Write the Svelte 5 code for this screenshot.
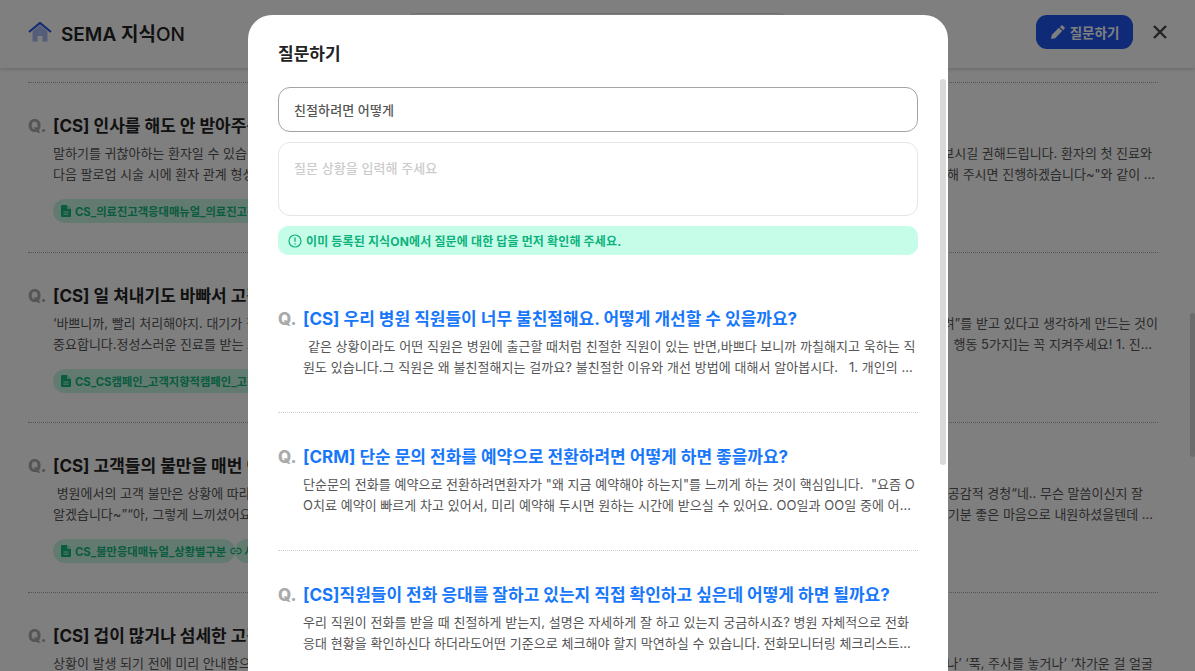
<script lang="ts">
  const items = [
    {
      title: '[CS] 인사를 해도 안 받아주는 환자는 어떻게 응대할까요?',
      lines: [
        { head: '말하기를 귀찮아하는 환자일 수 있습니다. 이런 경우', tail: '보시길 권해드립니다. 환자의 첫 진료와', inset: 6 },
        { head: '다음 팔로업 시술 시에 환자 관계 형성을 위해 먼저', tail: '해 주시면 진행하겠습니다~"와 같이 ...', inset: 3 }
      ],
      tags: [{ icon: 'file', label: 'CS_의료진고객응대매뉴얼_의료진고객응대' }]
    },
    {
      title: '[CS] 일 쳐내기도 바빠서 고객 응대가 어려워요',
      lines: [
        { head: '‘바쁘니까, 빨리 처리해야지. 대기가 길어지면 안 돼', tail: '려”를 받고 있다고 생각하게 만드는 것이', inset: 0 },
        { head: '중요합니다.정성스러운 진료를 받는 느낌을 주려면', tail: '행동 5가지]는 꼭 지켜주세요! 1. 진...', inset: 6 }
      ],
      tags: [{ icon: 'file', label: 'CS_CS캠페인_고객지향적캠페인_고객지향' }]
    },
    {
      title: '[CS] 고객들의 불만을 매번 어떻게 처리하나요?',
      lines: [
        { head: '\u00a0병원에서의 고객 불만은 상황에 따라 다릅니다. 먼저', tail: '공감적 경청“네.. 무슨 말씀이신지 잘', inset: 15 },
        { head: '알겠습니다~”“아, 그렇게 느끼셨어요? 많이 불편하', tail: '기분 좋은 마음으로 내원하셨을텐데 ...', inset: 5 }
      ],
      tags: [
        { icon: 'file', label: 'CS_불만응대매뉴얼_상황별구분' },
        { icon: 'link', label: '사례' }
      ]
    },
    {
      title: '[CS] 겁이 많거나 섬세한 고객은 어떻게 응대할까요?',
      lines: [
        { head: '상황이 발생 되기 전에 미리 안내함으로써 고객이', tail: '나’ ‘푹, 주사를 놓거나’ ‘차가운 걸 얼굴', inset: 5 }
      ],
      tags: []
    }
  ];

  const results = [
    {
      title: '[CS] 우리 병원 직원들이 너무 불친절해요. 어떻게 개선할 수 있을까요?',
      desc: '\u00a0\u200a같은 상황이라도 어떤 직원은 병원에 출근할 때처럼 친절한 직원이 있는 반면,바쁘다 보니까 까칠해지고 욱하는 직원도 있습니다.그 직원은 왜 불친절해지는 걸까요? 불친절한 이유와 개선 방법에 대해서 알아봅시다.\u00a0\u00a0\u00a01. 개인의 태도 문제일 수 있습니다. 직원 교육이 필요합니다.'
    },
    {
      title: '[CRM] 단순 문의 전화를 예약으로 전환하려면 어떻게 하면 좋을까요?',
      desc: '단순문의 전화를 예약으로 전환하려면환자가 "왜 지금 예약해야 하는지"를 느끼게 하는 것이 핵심입니다.\u00a0\u00a0"요즘 OO치료 예약이 빠르게 차고 있어서, 미리 예약해 두시면 원하는 시간에 받으실 수 있어요. OO일과 OO일 중에 어느 날이 편하실까요?"'
    },
    {
      title: '[CS]직원들이 전화 응대를 잘하고 있는지 직접 확인하고 싶은데 어떻게 하면 될까요?',
      desc: '우리 직원이 전화를 받을 때 친절하게 받는지, 설명은 자세하게 잘 하고 있는지 궁금하시죠? 병원 자체적으로 전화 응대 현황을 확인하신다 하더라도어떤 기준으로 체크해야 할지 막연하실 수 있습니다. 전화모니터링 체크리스트를 활용해 보세요.'
    }
  ];
</script>

{#snippet fileIcon()}
  <svg class="tag-icon" viewBox="0 0 10 12" width="10" height="12" aria-hidden="true">
    <path d="M1 0h5l4 4v7a1 1 0 0 1-1 1H1a1 1 0 0 1-1-1V1a1 1 0 0 1 1-1z" fill="currentColor" />
    <path d="M6 0v4h4" fill="#c6f5e3" opacity="0.7" />
    <path d="M2.500 7h5M2.500 9.200h5" stroke="#c6f5e3" stroke-width="1" />
  </svg>
{/snippet}

{#snippet linkIcon()}
  <svg class="tag-icon" viewBox="0 0 14 8" width="12" height="8" aria-hidden="true">
    <path d="M6 1H4a3 3 0 0 0 0 6h2M8 1h2a3 3 0 0 1 0 6H8M4.500 4h5" fill="none" stroke="currentColor" stroke-width="1.300" />
  </svg>
{/snippet}

<div class="page">
  <header class="topbar">
    <div class="brand">
      <svg viewBox="0 0 24 20" width="24" height="20" aria-hidden="true">
        <path d="M4.500 9.500 12 3l7.500 6.500V19.500h-5v-5.500h-5v5.500h-5z" fill="#a9bdf0" />
        <path d="M1 10 12 1l11 9" fill="none" stroke="#2b55e0" stroke-width="2.200" />
      </svg>
      <span>SEMA 지식<span class="on">ON</span></span>
    </div>
    <div class="search"></div>
    <div class="actions">
      <button class="ask">
        <svg viewBox="0 0 16 16" width="15" height="15" aria-hidden="true">
          <path d="M1 15l1-4.500 7.500-7.500 3.500 3.500-7.500 7.500z" fill="#fff" />
          <path d="M10.500 2 12 .5a1 1 0 0 1 1.400 0l2.100 2.100a1 1 0 0 1 0 1.400L14 5.500z" fill="#fff" />
        </svg>
        질문하기
      </button>
      <svg class="close" viewBox="0 0 14 14" width="14" height="14" aria-hidden="true">
        <path d="M1 1l12 12M13 1 1 13" fill="none" stroke="#444" stroke-width="2.300" />
      </svg>
    </div>
  </header>

  <main class="list">
    {#each items as item}
      <article class="row">
        <h3><span class="q">Q.</span>{item.title}</h3>
        <div class="lines">
          {#each item.lines as line}
            <p style="padding-right:{line.inset}px"><span>{line.head}</span><span>{line.tail}</span></p>
          {/each}
        </div>
        {#if item.tags.length}
          <div class="tags">
            {#each item.tags as tag}
              <span class="tag">
                {#if tag.icon === 'file'}{@render fileIcon()}{:else}{@render linkIcon()}{/if}
                {tag.label}
              </span>
            {/each}
          </div>
        {/if}
      </article>
    {/each}
  </main>

  <div class="page-thumb"></div>
</div>

<div class="backdrop">
  <section class="modal">
    <h2>질문하기</h2>
    <input class="field" value="친절하려면 어떻게" />
    <textarea class="field area" placeholder="질문 상황을 입력해 주세요"></textarea>
    <div class="notice">
      <svg viewBox="0 0 14 14" width="14" height="14" aria-hidden="true">
        <circle cx="7" cy="7" r="6" fill="none" stroke="currentColor" stroke-width="1.200" />
        <path d="M7 3.500v4.200M7 9.300v1.200" stroke="currentColor" stroke-width="1.300" />
      </svg>
      이미 등록된 지식ON에서 질문에 대한 답을 먼저 확인해 주세요.
    </div>
    <div class="results">
      {#each results as r}
        <article class="result">
          <h3><span class="q">Q.</span>{r.title}</h3>
          <p>{r.desc}</p>
        </article>
      {/each}
    </div>
    <div class="modal-thumb"></div>
  </section>
</div>

<style>
  :global(body) {
    overflow: hidden;
    background: #fff;
    font-family: Inter, 'Noto Sans CJK KR', sans-serif;
  }
  .page {
    height: 671px;
    overflow: hidden;
  }
  .topbar {
    height: 68px;
    box-sizing: border-box;
    padding: 0 28px 4px;
    display: flex;
    align-items: center;
    justify-content: space-between;
    background: #fff;
    box-shadow: 0 1px 4px rgba(0, 0, 0, 0.2);
    position: relative;
  }
  .brand {
    display: flex;
    align-items: center;
    gap: 9px;
    font-size: 19px;
    font-weight: 600;
    color: #222;
  }
  .on {
    font-weight: 500;
  }
  .search {
    width: 384px;
    height: 36px;
    border: 1px solid #ddd;
    border-radius: 12px;
    margin-left: -26px;
  }
  .actions {
    display: flex;
    align-items: center;
    gap: 20px;
  }
  .ask {
    width: 97px;
    height: 34px;
    display: flex;
    align-items: center;
    justify-content: center;
    gap: 5px;
    border: 0;
    border-radius: 11px;
    background: #1e56f0;
    color: #fff;
    font: 600 13.500px Inter, 'Noto Sans CJK KR', sans-serif;
  }
  .list {
    margin-top: 14px;
    padding: 0 37px 0 28px;
  }
  .row {
    height: 170px;
    box-sizing: border-box;
    border-top: 1px dotted #aaa;
    padding-top: 31px;
  }
  h3 {
    margin: 0;
    display: flex;
    line-height: 24px;
    font-size: 17px;
    font-weight: 700;
  }
  .q {
    width: 25px;
    flex: none;
    color: #aaa;
    font-size: 17px;
    font-weight: 800;
  }
  .row h3 {
    color: #222;
    white-space: nowrap;
  }
  .lines {
    margin: 5px 0 0 25px;
  }
  .lines p {
    margin: 0;
    display: flex;
    justify-content: space-between;
    font-size: 13px;
    line-height: 21px;
    color: #555;
    white-space: nowrap;
  }
  .tags {
    margin: 14px 0 0 25px;
    display: flex;
  }
  .tag {
    height: 24px;
    padding: 0 9px 0 8px;
    display: flex;
    align-items: center;
    gap: 4px;
    border-radius: 12px;
    background: #c6f5e3;
    color: #12b87c;
    font-size: 11.300px;
    font-weight: 700;
    white-space: nowrap;
  }
  /* the second chip's icon sits over the end of the first one */
  .tag + .tag .tag-icon {
    margin: 0 -2px 0 -13px;
  }
  .page-thumb {
    position: absolute;
    right: 0;
    top: 313px;
    width: 5px;
    height: 144px;
    border-radius: 3px;
    background: #d9d9d9;
  }
  .backdrop {
    position: fixed;
    inset: 0;
    background: rgba(0, 0, 0, 0.5);
    display: flex;
    justify-content: center;
    padding-top: 15px;
  }
  .modal {
    position: relative;
    width: 700px;
    height: 760px;
    box-sizing: border-box;
    padding: 27px 30px;
    display: flex;
    flex-direction: column;
    background: #fff;
    border-radius: 24px;
    margin-left: 1px;
  }
  h2 {
    margin: 0 0 21px;
    font-size: 17px;
    line-height: 24px;
    font-weight: 600;
    color: #222;
  }
  .field {
    box-sizing: border-box;
    flex: none;
    width: 100%;
    height: 45px;
    padding: 0 15px;
    border: 1px solid #a3a3a3;
    border-radius: 12px;
    outline: none;
    font: 500 13px Inter, 'Noto Sans CJK KR', sans-serif;
    letter-spacing: 0.1px;
    color: #555;
  }
  .area {
    height: 74px;
    margin-top: 10px;
    padding: 15px;
    border-color: #e5e5e5;
    resize: none;
    display: block;
  }
  .area::placeholder {
    color: #ccc;
  }
  .notice {
    margin-top: 10px;
    height: 29px;
    padding: 0 10px;
    display: flex;
    align-items: center;
    gap: 4px;
    border-radius: 10px;
    background: #c6fde9;
    color: #0cb27c;
    font-size: 12px;
    letter-spacing: 0.15px;
    font-weight: 700;
  }
  .results {
    margin-top: 51px;
  }
  .result {
    padding-bottom: 34px;
    margin-bottom: 31px;
    border-bottom: 1px dotted #d0d0d0;
  }
  .result h3 {
    color: #1777fb;
    line-height: 26px;
  }
  .result p {
    margin: 4px 0 0 25px;
    font-size: 13px;
    line-height: 21px;
    letter-spacing: 0.04px;
    color: #555;
    word-break: break-all;
    display: -webkit-box;
    -webkit-line-clamp: 2;
    -webkit-box-orient: vertical;
    overflow: hidden;
  }
  .modal-thumb {
    position: absolute;
    top: 64px;
    right: 2px;
    width: 6px;
    height: 386px;
    border-radius: 3px;
    background: #d9d9d9;
  }
</style>
